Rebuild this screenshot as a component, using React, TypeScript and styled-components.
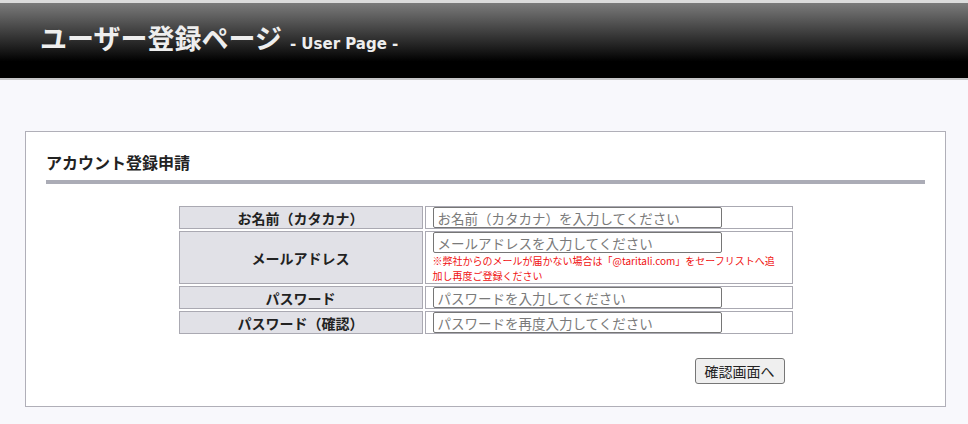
import React from 'react';
import styled, { createGlobalStyle } from 'styled-components';

const GlobalStyle = createGlobalStyle`
  body {
    margin: 0;
    background: #f8f8fc;
    font-family: 'Noto Sans CJK JP', 'Noto Sans', sans-serif;
    color: #222;
  }
`;

interface Field {
  label: string;
  placeholder: string;
  type: string;
  note?: string;
}

const fields: Field[] = [
  { label: 'お名前（カタカナ）', placeholder: 'お名前（カタカナ）を入力してください', type: 'text' },
  {
    label: 'メールアドレス',
    placeholder: 'メールアドレスを入力してください',
    type: 'email',
    note: '※弊社からのメールが届かない場合は「@taritali.com」をセーフリストへ追加し再度ご登録ください',
  },
  { label: 'パスワード', placeholder: 'パスワードを入力してください', type: 'password' },
  { label: 'パスワード（確認）', placeholder: 'パスワードを再度入力してください', type: 'password' },
];

export default function App() {
  return (
    <>
      <GlobalStyle />
      <Header>
        <Title>
          ユーザー登録ページ<SubTitle>- User Page -</SubTitle>
        </Title>
      </Header>
      <Main>
        <Panel>
          <Heading>アカウント登録申請</Heading>
          <FormTable>
            <tbody>
              {fields.map((f) => (
                <tr key={f.label}>
                  <Label>{f.label}</Label>
                  <Cell>
                    <Input type={f.type} placeholder={f.placeholder} />
                    {f.note && <Note>{f.note}</Note>}
                  </Cell>
                </tr>
              ))}
            </tbody>
          </FormTable>
          <ButtonRow>
            <Submit type="button">確認画面へ</Submit>
          </ButtonRow>
        </Panel>
      </Main>
    </>
  );
}

const Header = styled.header`
  height: 75px;
  border-top: 3px solid #dcdcdc;
  border-bottom: 2px solid #c6c6c8;
  background: linear-gradient(#7b7b7b 0%, #1a1a1a 62%, #000 78%, #000 100%);
  display: flex;
  align-items: center;
  padding-left: 40px;
`;

const Title = styled.h1`
  margin: 0;
  color: #eeeeee;
  font-size: 27px;
  line-height: 36px;
  font-weight: bold;
  display: flex;
  align-items: baseline;
`;

const SubTitle = styled.span`
  font-family: 'DejaVu Sans', 'Liberation Sans', sans-serif;
  font-size: 15px;
  font-weight: bold;
  margin-left: 8px;
`;

const Main = styled.main`
  padding: 51px 22px 18px 25px;
`;

const Panel = styled.section`
  background: #fff;
  border: 1px solid #b0afb8;
  padding: 19px 20px 22px;
`;

const Heading = styled.h2`
  margin: 0;
  font-size: 16px;
  line-height: 22px;
  font-weight: bold;
  color: #222;
  padding-bottom: 7px;
  border-bottom: 4px solid #abacb6;
`;

const FormTable = styled.table`
  width: 618px;
  margin: 20px auto 0;
  border-spacing: 2px;
`;

const Label = styled.th`
  width: 242px;
  background: #e1e1e7;
  border: 1px solid #aaa9b2;
  font-size: 14px;
  line-height: 20px;
  font-weight: bold;
  text-align: center;
  padding: 0;
  color: #222;
`;

const Cell = styled.td`
  border: 1px solid #aaa9b2;
  padding: 0 7px;
  line-height: 1;
`;

const Input = styled.input`
  display: block;
  box-sizing: border-box;
  width: 289px;
  height: 21px;
  margin: 0;
  padding: 0 4px;
  border: 1px solid #767676;
  border-radius: 2px;
  font-family: 'Noto Sans CJK JP', sans-serif;
  font-size: 13.5px;
  &::placeholder {
    color: #7a7a7a;
  }
`;

const Note = styled.p`
  margin: 0;
  color: #f01010;
  font-size: 10px;
  line-height: 15px;
`;

const ButtonRow = styled.div`
  width: 618px;
  margin: 22px auto 0;
  display: flex;
  justify-content: flex-end;
  padding-right: 10px;
  box-sizing: border-box;
`;

const Submit = styled.button`
  height: 26px;
  padding: 0 9px;
  font-family: 'Noto Sans CJK JP', sans-serif;
  font-size: 14px;
  line-height: 1;
  color: #222;
  background: #efefef;
  border: 1px solid #767676;
  border-radius: 3px;
`;
